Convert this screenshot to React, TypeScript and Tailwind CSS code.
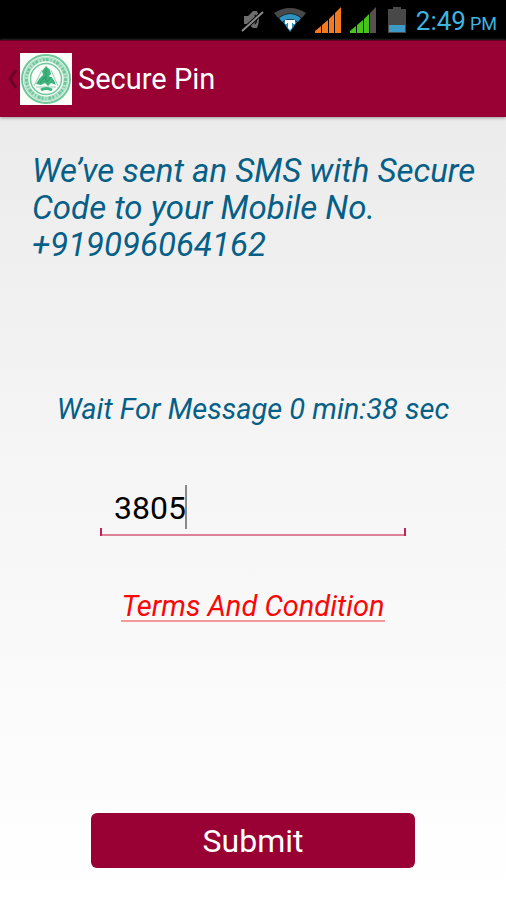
import { useState } from "react";

function MuteIcon() {
  return (
    <svg className="h-6 w-6" viewBox="0 0 24 24" aria-hidden="true">
      <path d="M3 8h4l5-5h4q4 8 0 17h-4l-5-4H3z" fill="#6c6c6c" />
      <path d="M14 7q3 5 0 9" fill="none" stroke="#111" strokeWidth="1.5" />
      <path d="M1 23L22 4" stroke="#000" strokeWidth="4" />
      <path d="M1 23L22 4" stroke="#8a8a8a" strokeWidth="2" />
    </svg>
  );
}

function WifiIcon() {
  return (
    <svg className="h-6 w-8" viewBox="0 0 32 24" aria-hidden="true">
      <path d="M0 5Q16-5 32 5L28 10Q16 1 4 10z" fill="#484848" />
      <path d="M5 10Q16 2 27 10L24 14Q16 8 8 14z" fill="#2e91be" />
      <path d="M9 14Q16 9 23 14L16 24z" fill="#2e91be" />
      <path d="M11 12h10v4h-2v-1h-1v5l-2 2-2-2v-5h-1v1h-2z" fill="#fff" />
    </svg>
  );
}

function SignalIcon({ color, last }: { color: string; last: string }) {
  return (
    <svg className="h-[26px] w-[26px]" viewBox="0 0 26 26" aria-hidden="true">
      <path d="M0 26v-2l6-5v7zM7 26v-8l6-5v13zM14 26V12l5-5v19z" fill={color} />
      <path d="M20 26V6l6-6v26z" fill={last} />
    </svg>
  );
}

function BatteryIcon() {
  return (
    <svg className="h-[26px] w-[18px]" viewBox="0 0 18 26" aria-hidden="true">
      <path d="M5 0h8v2h5v24H0V2h5z" fill="#484848" />
      <path d="M1 18h16v7H1z" fill="#3c9ac4" />
    </svg>
  );
}

function SealLogo() {
  return (
    <svg className="h-[52px] w-[52px] shrink-0" viewBox="0 0 52 52" aria-hidden="true">
      <rect width="52" height="52" fill="#fbfdf9" />
      <g fill="none" stroke="#6fc79b">
        <circle cx="26" cy="26" r="24" strokeWidth="2" />
        <circle cx="26" cy="26" r="20" stroke="#b4e2cb" strokeWidth="5" />
        <circle cx="26" cy="26" r="19.5" strokeWidth="3" strokeDasharray="2 1 3 2 1 2" />
        <circle cx="26" cy="26" r="15.5" strokeWidth="1.5" />
      </g>
      <path d="M26 13l4 4 1 4-2 2 4 4 3 5-5-2-3 3-3-3-4 2-5-1 3-5 4-4-1-4z" fill="#40b47e" />
      <path d="M26 16v11M20 30l4-6 3 5 4-5 4 6" fill="none" stroke="#2a9b66" strokeWidth="1" />
      <path d="M14 33l8-16M38 33l-7-16M16 34h20" fill="none" stroke="#8fd2b1" strokeWidth="1" />
      <path d="M21 37q5-3 11 0" fill="none" stroke="#40b47e" strokeWidth="3" />
    </svg>
  );
}

export default function App() {
  const [pin, setPin] = useState("3805");
  return (
    <div className="flex min-h-screen flex-col bg-linear-to-b from-[#e8e8e8] via-[#f5f5f5] to-white font-['Roboto',sans-serif]">
      <div className="flex h-10 items-center justify-end bg-black pr-[9px]">
        <div className="flex items-center gap-[9px]">
          <MuteIcon />
          <WifiIcon />
          <SignalIcon color="#f47a20" last="#f47a20" />
          <SignalIcon color="#45c51b" last="#585050" />
        </div>
        <div className="ml-3 flex items-center gap-[10px] text-[#3eb4e0]">
          <BatteryIcon />
          <p className="flex items-baseline gap-1 pt-1 text-[26px] leading-9">
            2:49 <span className="text-[18px]">PM</span>
          </p>
        </div>
      </div>

      <header className="flex h-[77px] items-center border-t border-[#65001f] bg-[#990033] pl-2 shadow-[0_1px_3px_#999]">
        <button type="button" aria-label="Back" className="flex items-center">
          <svg className="h-6 w-3" viewBox="0 0 12 24" fill="none" aria-hidden="true">
            <path d="M8 3L2 12l6 9" stroke="#6b0027" strokeWidth="3" />
          </svg>
          <SealLogo />
        </button>
        <h1 className="ml-[6px] text-[29px] leading-9 text-white">Secure Pin</h1>
      </header>

      <main className="flex flex-1 flex-col items-center pt-[35px] pb-8">
        <p className="w-full pr-4 pl-8 text-[33px] leading-[37px] text-[#055f87] italic">
          We’ve sent an SMS with Secure Code to your Mobile No. +919096064162
        </p>
        <p className="mt-32 text-[29px] leading-9 text-[#055f87] italic">Wait For Message 0 min:38 sec</p>

        <div className="relative mt-14 w-[306px] max-w-full">
          <input
            aria-label="Secure pin"
            inputMode="numeric"
            value={pin}
            onChange={(e) => setPin(e.target.value)}
            className="block h-[53px] w-full border-b-2 border-[#df8099] bg-transparent px-[14px] pb-[2px] text-[32px] text-black outline-none"
          />
          <span className="absolute bottom-0 left-0 h-2 w-[2px] bg-[#cc1f58]" />
          <span className="absolute right-0 bottom-0 h-2 w-[2px] bg-[#cc1f58]" />
          <span className="absolute top-[2px] left-[85px] h-11 w-[2px] bg-[#888]" />
        </div>

        <a href="#terms" className="mt-14 border-b-2 border-[#f59a9a] text-[29px] leading-7 text-[#fa0808] italic">
          Terms And Condition
        </a>

        <button
          type="button"
          className="mt-auto h-[55px] w-[324px] max-w-full rounded-md bg-[#990033] text-[32px] leading-9 text-white"
        >
          Submit
        </button>
      </main>
    </div>
  );
}
